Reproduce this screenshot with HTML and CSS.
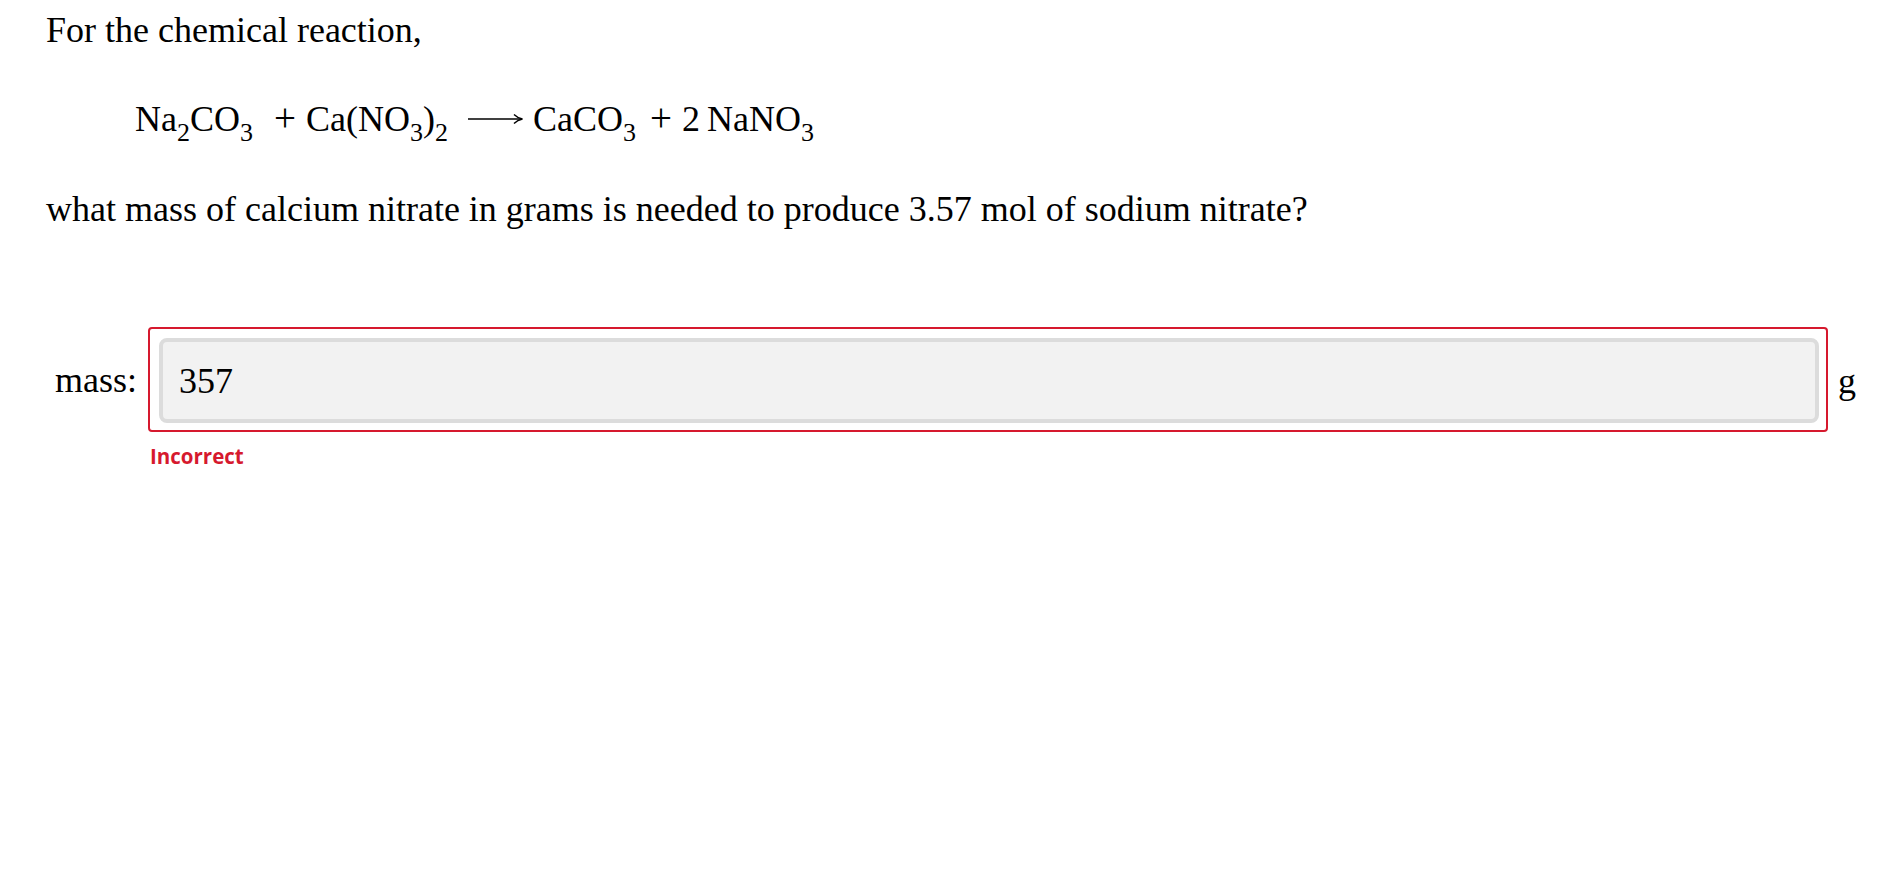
FILE: index.html
```html
<!DOCTYPE html>
<html lang="en">
<head>
<meta charset="utf-8">
<title>Chemical reaction question</title>
<link rel="stylesheet" href="styles.css">
</head>
<body>
<div class="page">
  <p class="text">For the chemical reaction,</p>
  <div class="equation">
    <span class="chem">Na<sub>2</sub>CO<sub>3</sub></span><span class="op">+</span><span class="chem">Ca(NO<sub>3</sub>)<sub>2</sub></span><span class="arrow"><svg width="55" height="14" viewBox="0 0 55 14"><path d="M0 7H53" stroke="#000" stroke-width="1.5" fill="none"/><path d="M46 2.5Q49.5 6 54.5 7Q49.5 8 46 11.5" stroke="#000" stroke-width="1.4" fill="none"/></svg></span><span class="chem">CaCO<sub>3</sub></span><span class="op op-tight">+</span><span class="chem"><span class="coef">2</span>NaNO<sub>3</sub></span>
  </div>
  <p class="text question">what mass of calcium nitrate in grams is needed to produce 3.57 mol of sodium nitrate?</p>
  <div class="answer">
    <label class="label" for="mass">mass:</label>
    <div class="field">
      <input id="mass" class="input" type="text" value="357" readonly>
    </div>
    <span class="unit">g</span>
    <div class="feedback">Incorrect</div>
  </div>
</div>
</body>
</html>
```
FILE: styles.css
```css
html, body {
  margin: 0;
  padding: 0;
  background: #fff;
}

.page {
  padding: 10px 40px 0 46px;
  font-family: "Liberation Serif", "Times New Roman", serif;
  color: #000;
}

.text {
  margin: 0;
  font-size: 36px;
  line-height: 41px;
}

.equation {
  margin-top: 48px;
  padding-left: 89px;
  font-size: 36px;
  line-height: 40px;
  white-space: nowrap;
}

.equation sub {
  font-size: 26px;
  line-height: 0;
  vertical-align: -10px;
}

.op {
  display: inline-block;
  margin: 0 10px 0 21px;
  font-size: 39px;
  line-height: 0;
}

.op-tight {
  margin-left: 14px;
}

.arrow {
  display: inline-block;
  margin: 0 10px 0 20px;
  vertical-align: 5px;
}

.arrow svg {
  display: block;
}

.coef {
  margin-right: 7px;
}

.question {
  margin-top: 50px;
}

.answer {
  margin: 97px 0 0 9px;
  display: grid;
  grid-template-columns: auto 1fr auto;
  column-gap: 11px;
  align-items: center;
}

.label {
  font-size: 36px;
  line-height: 41px;
  padding-top: 2px;
}

.field {
  border: 2px solid #d6192e;
  border-radius: 4px;
  padding: 9px 7px 7px 9px;
  margin-right: -1px;
}

.input {
  display: block;
  box-sizing: border-box;
  width: 100%;
  height: 85px;
  margin: 0;
  padding: 0 16px;
  border: 4px solid #dcdcdc;
  border-radius: 8px;
  background: #f2f2f2;
  font-family: "Liberation Serif", "Times New Roman", serif;
  font-size: 36px;
  color: #000;
  outline: none;
}

.unit {
  font-size: 36px;
  line-height: 41px;
  padding-top: 4px;
}

.feedback {
  grid-column: 2;
  margin-top: 11px;
  padding-left: 2px;
  font-family: "Open Sans", sans-serif;
  font-weight: 700;
  font-size: 20.5px;
  line-height: 27px;
  color: #d6192e;
}
```
